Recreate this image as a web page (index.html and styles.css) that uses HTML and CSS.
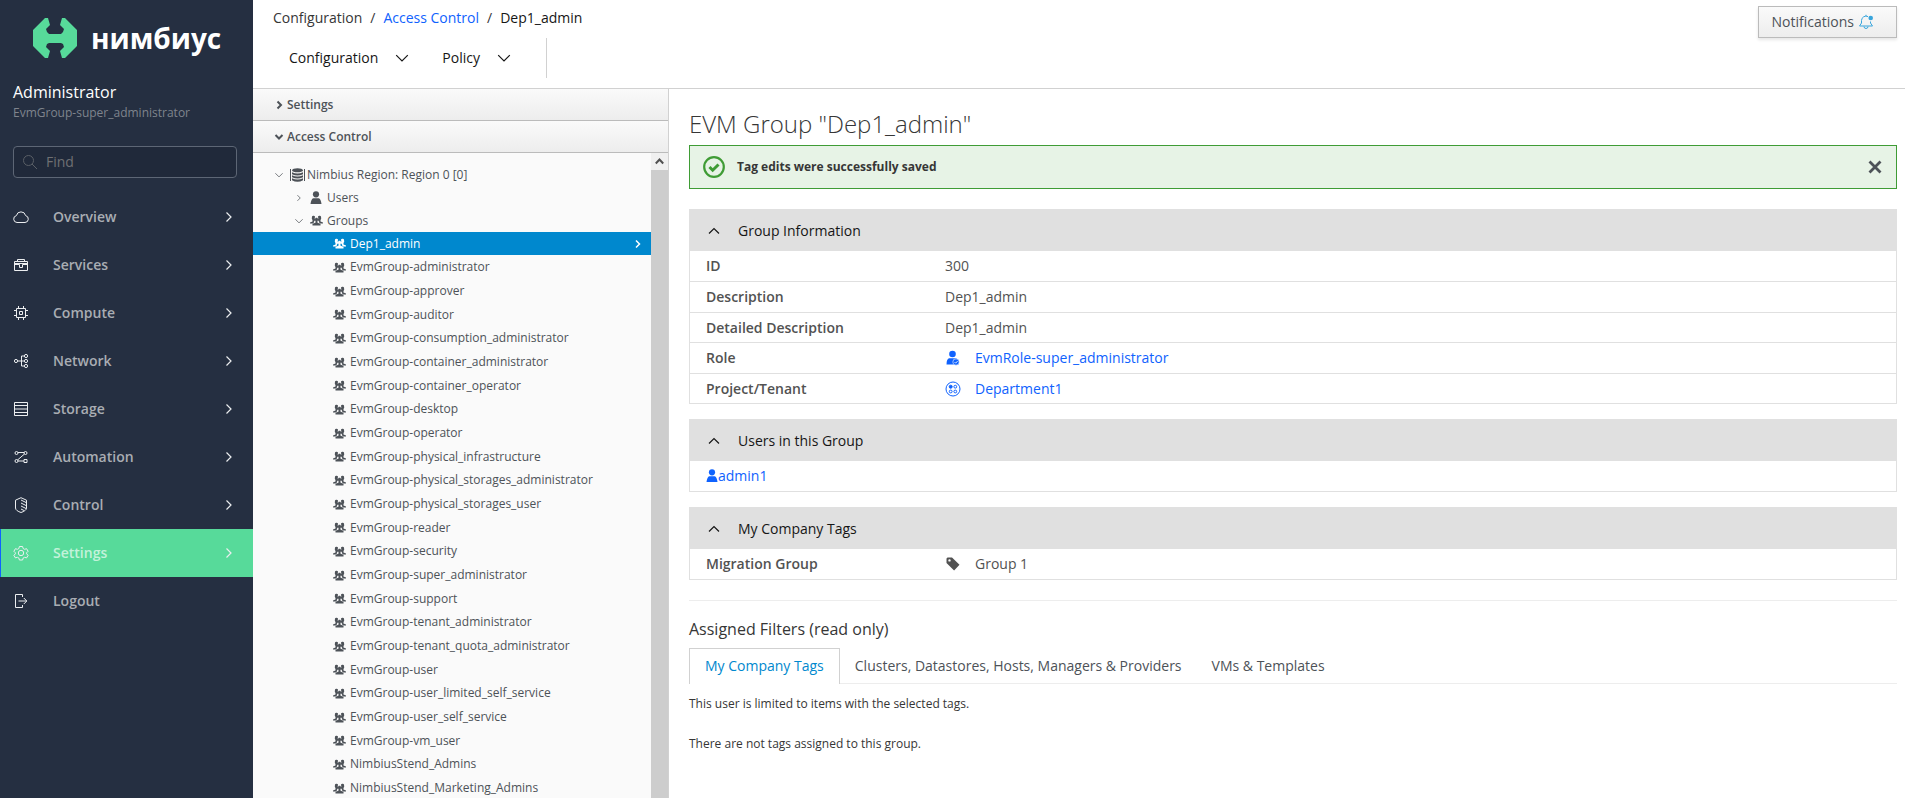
FILE: index.html
```html
<!DOCTYPE html>
<html lang="en">
  <head>
    <meta charset="UTF-8" />
    <meta name="viewport" content="width=device-width, initial-scale=1" />
    <title>Access Control</title>
    <link rel="stylesheet" href="styles.css">
  </head>
  <body>
    <!-- icon sprite -->
    <svg class="sprite" aria-hidden="true">
      <symbol id="i-right" viewBox="0 0 16 16"><path d="M5.5 3.5 10 8l-4.500 4.500" fill="none" stroke="currentColor" stroke-width="1.200"/></symbol>
      <symbol id="i-down" viewBox="0 0 16 16"><path d="M2.200 5.200 8 11l5.800-5.800" fill="none" stroke="currentColor" stroke-width="1.200"/></symbol>
      <symbol id="i-up" viewBox="0 0 16 16"><path d="M3 10.500 8 5.500l5 5" fill="none" stroke="currentColor" stroke-width="1.200"/></symbol>
      <symbol id="i-group" viewBox="0 0 13 11">
        <path fill="currentColor" d="M2 1.500C2.300.500 4.600.300 5 1.500L4.700 3.500 5.300 5 4 6.500 3.500 8.500H0V7.600L2.500 6.500V5L1.800 3.800ZM11 1.500C10.700.500 8.400.300 8 1.500L8.300 3.500 7.700 5 9 6.500 9.500 8.500H13V7.600L10.500 6.500V5L11.200 3.800Z"/>
        <path fill="currentColor" d="M6.500 2.700c1 0 1.500.7 1.500 1.700S7.600 6.300 7.400 6.600v1L10.500 9v1.500h-8V9l3.100-1.400v-1C5.400 6.300 5 5.400 5 4.400s.5-1.700 1.500-1.700z"/>
      </symbol>
      <symbol id="i-user" viewBox="0 0 12 14">
        <circle cx="6" cy="3.300" r="3.100" fill="currentColor"/>
        <path fill="currentColor" d="M3.300 7.300h5.400q2.100.7 2.800 5.700H.5q.7-5 2.800-5.700z"/>
      </symbol>
    </svg>

    <nav class="sidebar">
      <div class="brand">
        <svg width="44" height="40" viewBox="0 0 44 40">
          <path fill="#57da9a" d="M12 0h3l2 7-4 4 1 3 2 2h12l2-2 1-3-4-4 2-7h3l12 12v16L32 40h-3l-2-7 4-4-1-3-2-1H16l-2 1-1 3 4 4-2 7h-3L0 28V12z"/>
        </svg>
        <span>нимбиус</span>
      </div>
      <div class="who">
        <div class="who-name">Administrator</div>
        <div class="who-group">EvmGroup-super_administrator</div>
      </div>
      <div class="find">
        <svg width="16" height="16" viewBox="0 0 16 16" fill="none" stroke="currentColor"><circle cx="6.500" cy="6.500" r="5"/><path d="M10 10l5 5"/></svg>
        <input type="text" placeholder="Find" aria-label="Find">
      </div>
      <ul class="menu">
        <li><a href="#">
          <svg class="mi" viewBox="0 0 16 16"><path d="M4 13.500a3.500 3.500 0 0 1-.6-6.900 4.700 4.700 0 0 1 9.200 0 3.500 3.500 0 0 1-.6 6.900z"/></svg>
          <span>Overview</span><svg class="chev"><use href="#i-right"/></svg></a></li>
        <li><a href="#">
          <svg class="mi" viewBox="0 0 16 16"><path d="M1.500 4.500h13v9h-13zM4.500 4.500v-2h7v2M1.500 7.500h5v3h3v-3h5M1.500 6.500h13"/></svg>
          <span>Services</span><svg class="chev"><use href="#i-right"/></svg></a></li>
        <li><a href="#">
          <svg class="mi" viewBox="0 0 16 16"><path d="M3.500 3.500h9v9h-9zM6.500 6.500h3v3h-3zM5.500 1v2M10.500 1v2M5.500 13v2M10.500 13v2M1 5.500h2M1 10.500h2M13 5.500h2M13 10.500h2"/></svg>
          <span>Compute</span><svg class="chev"><use href="#i-right"/></svg></a></li>
        <li><a href="#">
          <svg class="mi" viewBox="0 0 16 16"><circle cx="3" cy="8" r="1.600"/><circle cx="13" cy="3" r="1.600"/><circle cx="13" cy="8" r="1.600"/><circle cx="13" cy="13" r="1.600"/><path d="M4.500 8h7M11.500 3h-3v10h3"/></svg>
          <span>Network</span><svg class="chev"><use href="#i-right"/></svg></a></li>
        <li><a href="#">
          <svg class="mi" viewBox="0 0 16 16"><path d="M1.500 1.500h13v13h-13zM1.500 4.500h13M1.500 8h13M1.500 11.500h13"/></svg>
          <span>Storage</span><svg class="chev"><use href="#i-right"/></svg></a></li>
        <li><a href="#">
          <svg class="mi" viewBox="0 0 16 16"><circle cx="3.500" cy="4" r="1.500"/><circle cx="12.500" cy="4" r="1.500"/><circle cx="3.500" cy="12" r="1.500"/><path d="M11 10.500h3v3h-3zM5 3.500h6M5 12h6M11.500 5l-7 6"/></svg>
          <span>Automation</span><svg class="chev"><use href="#i-right"/></svg></a></li>
        <li><a href="#">
          <svg class="mi" viewBox="0 0 16 16"><path d="M8 .7l5.500 2.500V11c0 2-2.500 3.500-5.500 4.500-3-1-5.500-2.500-5.500-4.500V3.200zM8 3l5 2.500M8 6l5 2.500M8 9l5 2.500M8 12l3 1.500"/></svg>
          <span>Control</span><svg class="chev"><use href="#i-right"/></svg></a></li>
        <li class="active"><a href="#">
          <svg class="mi" viewBox="0 0 16 16"><circle cx="8" cy="8" r="2.700"/><path d="M6.400 1.500h3.200l.5 2 1.500.8 2-.6 1.500 2.600-1.500 1.500v1l1.500 1.500-1.500 2.600-2-.6-1.500.8-.5 1.900H6.400l-.5-1.900-1.500-.8-2 .6-1.500-2.600 1.500-1.500v-1L.9 6.300l1.500-2.600 2 .6 1.500-.8z"/></svg>
          <span>Settings</span><svg class="chev"><use href="#i-right"/></svg></a></li>
        <li><a href="#">
          <svg class="mi" viewBox="0 0 16 16"><path d="M9.500 4V1.500h-7v13h7V12M5.500 8h8M10.800 5l3 3-3 3"/></svg>
          <span>Logout</span></a></li>
      </ul>
    </nav>

    <div class="page">
      <header class="top">
        <div>
          <div class="crumbs">
            <span>Configuration</span><i>/</i><a href="#">Access Control</a><i>/</i><b>Dep1_admin</b>
          </div>
          <div class="toolbar">
            <button type="button">Configuration<svg width="16" height="16"><use href="#i-down"/></svg></button>
            <button type="button">Policy<svg width="16" height="16"><use href="#i-down"/></svg></button>
          </div>
        </div>
        <button type="button" class="notify">Notifications
          <svg width="16" height="16" viewBox="0 0 16 16" fill="none" stroke="#39a5dc"><path d="M10 2.600A4.500 4.500 0 0 0 3.500 6.500V9L1.500 12h13l-2-3V7.500M6 12.500a2 2 0 0 0 4 0M8 2V.8"/><circle cx="12.700" cy="4" r="2.300" fill="#39a5dc" stroke="none"/></svg>
        </button>
      </header>

      <div class="body">
        <aside class="explorer">
          <button type="button" class="acc"><svg width="10" height="10" viewBox="0 0 10 10"><path d="M3.500 1.500 7 5 3.500 8.500"/></svg>Settings</button>
          <button type="button" class="acc"><svg width="10" height="10" viewBox="0 0 10 10"><path d="M1.500 3 5 6.500 8.500 3"/></svg>Access Control</button>
          <div class="tree-wrap">
            <div class="tree">
              <div class="node root">
                <svg class="tw"><use href="#i-down"/></svg>
                <svg class="db" viewBox="0 0 15 14" fill="currentColor"><path d="M0 1h1v12H0zM14 1h1v12h-1z"/><path d="M2 2.200C2-.5 13-.5 13 2.200S2 5 2 2.200zM2 4.300q5.500 2.400 11 0v2q-5.500 2.400-11 0zM2 7.300q5.500 2.400 11 0v2q-5.500 2.400-11 0zM2 10.300q5.500 2.400 11 0v1.900q-5.500 3.200-11 0z"/></svg>
                Nimbius Region: Region 0 [0]
              </div>
              <div class="node sub"><svg class="tw"><use href="#i-right"/></svg><svg class="us"><use href="#i-user"/></svg>Users</div>
              <div class="node sub"><svg class="tw"><use href="#i-down"/></svg><svg class="gr"><use href="#i-group"/></svg>Groups</div>
              <ul class="leaves">
                <li class="selected"><svg class="gr"><use href="#i-group"/></svg>Dep1_admin<svg class="go" viewBox="0 0 10 10"><path d="M3 1.500 6.500 5 3 8.500"/></svg></li>
                <li><svg class="gr"><use href="#i-group"/></svg>EvmGroup-administrator</li>
                <li><svg class="gr"><use href="#i-group"/></svg>EvmGroup-approver</li>
                <li><svg class="gr"><use href="#i-group"/></svg>EvmGroup-auditor</li>
                <li><svg class="gr"><use href="#i-group"/></svg>EvmGroup-consumption_administrator</li>
                <li><svg class="gr"><use href="#i-group"/></svg>EvmGroup-container_administrator</li>
                <li><svg class="gr"><use href="#i-group"/></svg>EvmGroup-container_operator</li>
                <li><svg class="gr"><use href="#i-group"/></svg>EvmGroup-desktop</li>
                <li><svg class="gr"><use href="#i-group"/></svg>EvmGroup-operator</li>
                <li><svg class="gr"><use href="#i-group"/></svg>EvmGroup-physical_infrastructure</li>
                <li><svg class="gr"><use href="#i-group"/></svg>EvmGroup-physical_storages_administrator</li>
                <li><svg class="gr"><use href="#i-group"/></svg>EvmGroup-physical_storages_user</li>
                <li><svg class="gr"><use href="#i-group"/></svg>EvmGroup-reader</li>
                <li><svg class="gr"><use href="#i-group"/></svg>EvmGroup-security</li>
                <li><svg class="gr"><use href="#i-group"/></svg>EvmGroup-super_administrator</li>
                <li><svg class="gr"><use href="#i-group"/></svg>EvmGroup-support</li>
                <li><svg class="gr"><use href="#i-group"/></svg>EvmGroup-tenant_administrator</li>
                <li><svg class="gr"><use href="#i-group"/></svg>EvmGroup-tenant_quota_administrator</li>
                <li><svg class="gr"><use href="#i-group"/></svg>EvmGroup-user</li>
                <li><svg class="gr"><use href="#i-group"/></svg>EvmGroup-user_limited_self_service</li>
                <li><svg class="gr"><use href="#i-group"/></svg>EvmGroup-user_self_service</li>
                <li><svg class="gr"><use href="#i-group"/></svg>EvmGroup-vm_user</li>
                <li><svg class="gr"><use href="#i-group"/></svg>NimbiusStend_Admins</li>
                <li><svg class="gr"><use href="#i-group"/></svg>NimbiusStend_Marketing_Admins</li>
              </ul>
            </div>
            <div class="scroll">
              <svg width="17" height="17" viewBox="0 0 17 17"><path d="M4.800 10.500l3.700-4 3.700 4" fill="none" stroke="#505050" stroke-width="2"/></svg>
            </div>
          </div>
        </aside>

        <main class="content">
          <h1>EVM Group "Dep1_admin"</h1>
          <div class="alert">
            <svg width="22" height="22" viewBox="0 0 22 22" fill="none" stroke="#3f9c35"><circle cx="11" cy="11" r="9.800" stroke-width="2.200"/><path d="M6.500 11l3.200 3.200L15.500 8.500" stroke-width="3"/></svg>
            <strong>Tag edits were successfully saved</strong>
            <button type="button" aria-label="Close"><svg width="14" height="14" viewBox="0 0 14 14"><path d="M1.500 1.500l11 11M12.500 1.500l-11 11" stroke="#4d5258" stroke-width="2.800"/></svg></button>
          </div>

          <section class="panel">
            <h2><svg width="16" height="16"><use href="#i-up"/></svg>Group Information</h2>
            <table>
              <tr><th>ID</th><td>300</td></tr>
              <tr><th>Description</th><td>Dep1_admin</td></tr>
              <tr><th>Detailed Description</th><td>Dep1_admin</td></tr>
              <tr><th>Role</th><td><a href="#" class="with-icon">
                <svg width="16" height="16" viewBox="0 0 16 16"><circle cx="7.500" cy="4" r="3.300" fill="currentColor"/><path fill="currentColor" d="M4 8.300h7q2 .6 2.500 3v3.200H1.500q0-5.500 2.500-6.200z"/><circle cx="11" cy="12" r="3.200" fill="#0f62fe" stroke="#fff" stroke-width=".6"/><path d="M9.500 12l1.200 1.200 2-2.200" fill="none" stroke="#fff" stroke-width=".8"/></svg>EvmRole-super_administrator</a></td></tr>
              <tr><th>Project/Tenant</th><td><a href="#" class="with-icon">
                <svg width="16" height="16" viewBox="0 0 16 16" fill="none" stroke="currentColor"><circle cx="8" cy="8" r="7"/><circle cx="5.700" cy="5.700" r="1.500" fill="currentColor"/><circle cx="10.300" cy="5.700" r="1.400"/><circle cx="5.700" cy="10.500" r="1.400"/><circle cx="10.300" cy="10.500" r="1.400"/></svg>Department1</a></td></tr>
            </table>
          </section>

          <section class="panel">
            <h2><svg width="16" height="16"><use href="#i-up"/></svg>Users in this Group</h2>
            <table>
              <tr><td><a href="#" class="user-link"><svg width="12" height="14"><use href="#i-user"/></svg>admin1</a></td></tr>
            </table>
          </section>

          <section class="panel">
            <h2><svg width="16" height="16"><use href="#i-up"/></svg>My Company Tags</h2>
            <table>
              <tr><th>Migration Group</th><td><span class="with-icon">
                <svg width="16" height="16" viewBox="0 0 16 16"><path fill="currentColor" fill-rule="evenodd" d="M1.500 2.500l1-1H7l7.500 7.300-5.400 5.700L1.500 7zM4.500 3.200a1.200 1.200 0 1 0 0 2.400 1.200 1.200 0 0 0 0-2.400z"/></svg>Group 1</span></td></tr>
            </table>
          </section>

          <hr>
          <h3>Assigned Filters (read only)</h3>
          <ul class="tabs">
            <li class="active"><a href="#">My Company Tags</a></li>
            <li><a href="#">Clusters, Datastores, Hosts, Managers &amp; Providers</a></li>
            <li><a href="#">VMs &amp; Templates</a></li>
          </ul>
          <p>This user is limited to items with the selected tags.</p>
          <p>There are not tags assigned to this group.</p>
        </main>
      </div>
    </div>
  </body>
</html>
```
FILE: styles.css
```css
* {
  box-sizing: border-box;
}
body {
  margin: 0;
  height: 100vh;
  display: flex;
  overflow: hidden;
  font: 12px/20px "Open Sans", "Noto Sans", sans-serif;
  color: #363636;
  background: #fff;
}
svg {
  flex: none;
  display: block;
}
ul {
  list-style: none;
  margin: 0;
  padding: 0;
}
a {
  color: #0f62fe;
  text-decoration: none;
}
button {
  font: inherit;
  color: inherit;
  background: none;
  border: 0;
  padding: 0;
}
.sprite {
  position: absolute;
  width: 0;
  height: 0;
}

/* left navigation */
.sidebar {
  width: 253px;
  flex: none;
  background: #252f41;
  color: #fff;
}
.brand {
  display: flex;
  align-items: center;
  gap: 14px;
  height: 76px;
  padding-left: 33px;
  font: 700 28px/32px "Open Sans", sans-serif;
}
.who {
  padding: 6px 13px 0;
}
.who-name {
  font-size: 16px;
}
.who-group {
  line-height: 22px;
  color: #7f848d;
}
.find {
  display: flex;
  align-items: center;
  gap: 16px;
  height: 32px;
  margin: 22px 16px 15px 13px;
  padding: 0 8px;
  border: 1px solid #5d6675;
  border-radius: 4px;
  background: #20293a;
  color: #5a5f66;
}
.find svg {
  width: 16px;
}
.find input {
  flex: 1;
  min-width: 0;
  margin-left: -8px;
  border: 0;
  padding: 0;
  outline: 0;
  background: none;
  color: #fff;
  font: 14px/20px "Open Sans", sans-serif;
}
.find input::placeholder {
  color: #6f7073;
}
.menu a {
  display: flex;
  align-items: center;
  height: 48px;
  padding: 0 16px 0 13px;
  font-size: 14px;
  font-weight: 600;
  color: #a9adb3;
}
.menu span {
  flex: 1;
  margin-left: 24px;
}
.mi {
  width: 16px;
  height: 16px;
  fill: none;
  stroke: #eceef0;
}
.chev {
  width: 16px;
  height: 16px;
  color: #eceef0;
}
.menu .active a {
  background: #57da9a;
  color: #c3f2da;
  border-left: 1px solid #0f62fe;
  padding-left: 12px;
}

/* header */
.page {
  flex: 1;
  min-width: 0;
  display: flex;
  flex-direction: column;
}
.top {
  display: flex;
  justify-content: space-between;
  align-items: flex-start;
  height: 89px;
  flex: none;
  border-bottom: 1px solid #d1d1d1;
  padding: 6px 8px 0 20px;
  font-size: 14px;
}
.crumbs {
  line-height: 24px;
}
.crumbs i {
  font-style: normal;
  margin: 0 8px;
}
.crumbs b {
  font-weight: 400;
  color: #161616;
}
.toolbar {
  display: flex;
  height: 40px;
  margin-top: 8px;
  border-right: 1px solid #d1d1d1;
  width: 274px;
}
.toolbar button {
  display: flex;
  align-items: center;
  gap: 16px;
  padding: 0 16px;
  color: #161616;
}
.notify {
  display: flex;
  align-items: center;
  gap: 4px;
  height: 32px;
  padding: 0 22px 0 13px;
  border: 1px solid #bbb;
  background: linear-gradient(#fafafa, #ededed);
  box-shadow: 0 2px 3px rgba(3, 3, 3, 0.1);
  color: #4d5258;
}

/* tree */
.body {
  flex: 1;
  min-height: 0;
  display: flex;
}
.explorer {
  width: 416px;
  flex: none;
  display: flex;
  flex-direction: column;
  border-right: 1px solid #d1d1d1;
  background: #fafafa;
}
.acc {
  display: flex;
  align-items: center;
  gap: 3px;
  height: 32px;
  flex: none;
  padding-left: 21px;
  border-bottom: 1px solid #bbb;
  background: linear-gradient(#fafafa, #ededed);
  color: #4d5258;
  font-weight: 600;
}
.acc svg {
  fill: none;
  stroke: #4d5258;
  stroke-width: 2;
}
.tree-wrap {
  flex: 1;
  min-height: 0;
  display: flex;
}
.tree {
  flex: 1;
  padding-top: 11px;
  overflow: hidden;
  color: #4d5258;
}
.node,
.leaves li {
  display: flex;
  align-items: center;
  height: 24px;
}
.root {
  height: 22px;
  padding-left: 21px;
}
.sub {
  height: 23px;
  padding-left: 41px;
}
.tw {
  width: 10px;
  height: 10px;
}
.db {
  width: 15px;
  height: 14px;
  margin: 0 2px 0 6px;
}
.us {
  width: 12px;
  height: 14px;
  margin: 0 5px 0 6px;
}
.gr {
  width: 13px;
  height: 11px;
  margin-right: 4px;
}
.sub .gr {
  margin-left: 6px;
}
.leaves li {
  padding-left: 80px;
}
.leaves li:nth-child(3n+1) {
  height: 23px;
}
.leaves .selected {
  background: #0088ce;
  color: #fff;
}
.go {
  width: 10px;
  height: 10px;
  margin: 0 8px 0 auto;
  fill: none;
  stroke: #fff;
  stroke-width: 1.5;
}
.scroll {
  width: 17px;
  background: #cdcdcd;
}
.scroll svg {
  background: #f0f0f0;
}

/* details */
.content {
  flex: 1;
  min-width: 0;
  padding: 20px 8px 0 20px;
}
h1 {
  margin: 0 0 6px;
  font-size: 24px;
  line-height: 30px;
  font-weight: 300;
}
.alert {
  display: flex;
  align-items: center;
  gap: 12px;
  height: 44px;
  padding: 0 14px 0 13px;
  border: 1px solid #3f9c35;
  background: #e7f3e6;
}
.alert button {
  margin-left: auto;
}
.panel {
  margin-top: 15px;
  border: 1px solid #e0e0e0;
  border-top: 0;
}
.alert + .panel {
  margin-top: 20px;
}
.panel h2 {
  display: flex;
  align-items: center;
  gap: 16px;
  height: 42px;
  margin: 0;
  padding: 2px 16px 0;
  background: #e0e0e0;
  color: #161616;
  font-size: 14px;
  font-weight: 400;
}
.panel table {
  width: 100%;
  border-spacing: 0;
  color: #525252;
  font-size: 14px;
}
.panel th,
.panel td {
  height: 30px;
  padding: 0 16px;
  text-align: left;
}
.panel th {
  width: 239px;
  font-weight: 600;
}
.panel tr + tr th,
.panel tr + tr td {
  border-top: 1px solid #e0e0e0;
}
.panel tr:nth-child(even) th,
.panel tr:nth-child(even) td {
  height: 31px;
}
.with-icon {
  display: flex;
  align-items: center;
  gap: 14px;
}
.user-link {
  display: flex;
  align-items: center;
}
hr {
  margin: 20px 0 18px;
  border: 0;
  border-top: 1px solid #ededed;
}
h3 {
  margin: 0 0 9px;
  font-size: 16px;
  line-height: 20px;
  font-weight: 400;
}
.tabs {
  display: flex;
  border-bottom: 1px solid #ededed;
}
.tabs a {
  display: block;
  height: 36px;
  margin-bottom: -1px;
  padding: 7px 15px;
  border: 1px solid transparent;
  border-bottom: 0;
  color: #4d5258;
  font-size: 14px;
}
.tabs li + li a {
  padding: 7px 14px;
}
.tabs .active a {
  border-color: #d1d1d1;
  background: #fff;
  color: #0088ce;
}
p {
  margin: 10px 0 20px;
}
```
